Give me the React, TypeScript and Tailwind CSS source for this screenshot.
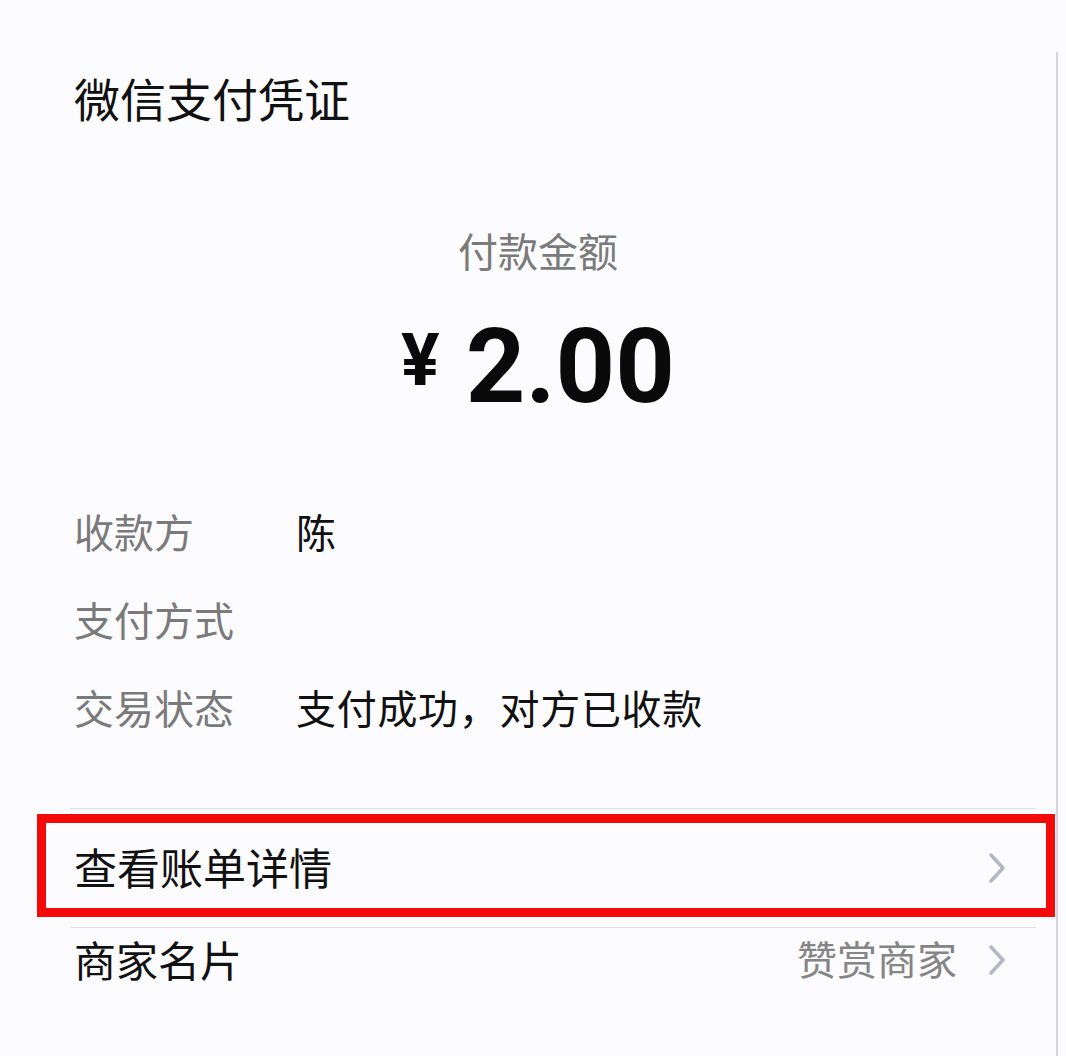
const cjk = "font-['Noto_Sans_CJK_SC',_'Noto_Sans',_sans-serif]";

const details = [
  { label: "收款方", value: "陈" },
  { label: "支付方式", value: "" },
  { label: "交易状态", value: "支付成功，对方已收款" },
];

function Chevron() {
  return (
    <svg width="20" height="32" viewBox="0 0 20 32" fill="none" className="shrink-0">
      <polyline
        points="4,3 16,16 4,29"
        stroke="#b3b7c6"
        strokeWidth="3.5"
        strokeLinecap="round"
        strokeLinejoin="round"
      />
    </svg>
  );
}

export default function App() {
  return (
    <div className={`flex w-[1066px] h-[1056px] overflow-hidden bg-[#fcfbfe] ${cjk}`}>
      {/* Receipt */}
      <div className="relative w-[1056px] flex flex-col">
        <h1 className="mt-[72px] pl-[74px] text-[46px] leading-[50px] font-normal text-[#111]">
          微信支付凭证
        </h1>

        {/* Amount */}
        <div className="mt-[106px] pl-[20px] flex flex-col items-center">
          <p className="text-[40px] leading-[44px] text-[#7a7a7a]">付款金额</p>
          <div className="mt-[42px] flex items-start font-['Roboto',_sans-serif] font-bold text-[#0a0a0a]">
            <span className="text-[72px] leading-[106px] -mt-[6px] mr-[26px]">¥</span>
            <span className="text-[104px] leading-[106px]">2.00</span>
          </div>
        </div>

        {/* Details */}
        <div className="mt-[67px] pl-[74px] flex flex-col">
          {details.map((row) => (
            <div key={row.label} className="flex h-[88px] items-center text-[40px]">
              <span className="w-[222px] text-[#7a7a7a]">{row.label}</span>
              <span className="text-[#111] tracking-[0.7px]">{row.value}</span>
            </div>
          ))}
        </div>

        <div className="mt-[57px] ml-[70px] w-[966px] h-[1px] bg-[#dedee2]" />

        {/* Bill details row */}
        <div className="relative flex h-[118px] items-center justify-between pl-[74px] pr-[49px]">
          <span className="text-[43px] text-[#111] -mt-[4px]">查看账单详情</span>
          <Chevron />
          {/* annotation */}
          <div className="absolute left-[37px] top-[5px] w-[1018px] h-[103px] border-[9px] border-[#f50a0a]" />
        </div>

        <div className="ml-[70px] w-[966px] h-[1px] bg-[#dedee2]" />

        {/* Merchant row */}
        <div className="flex h-[64px] items-center justify-between pl-[74px] pr-[49px]">
          <span className="text-[42px] text-[#111] -mt-[4px]">商家名片</span>
          <div className="flex items-center gap-[30px]">
            <span className="text-[40px] text-[#858585] -mt-[4px]">赞赏商家</span>
            <Chevron />
          </div>
        </div>
      </div>

      {/* Edge */}
      <div className="mt-[52px] w-[2px] bg-[#d3d6de]" />
    </div>
  );
}
